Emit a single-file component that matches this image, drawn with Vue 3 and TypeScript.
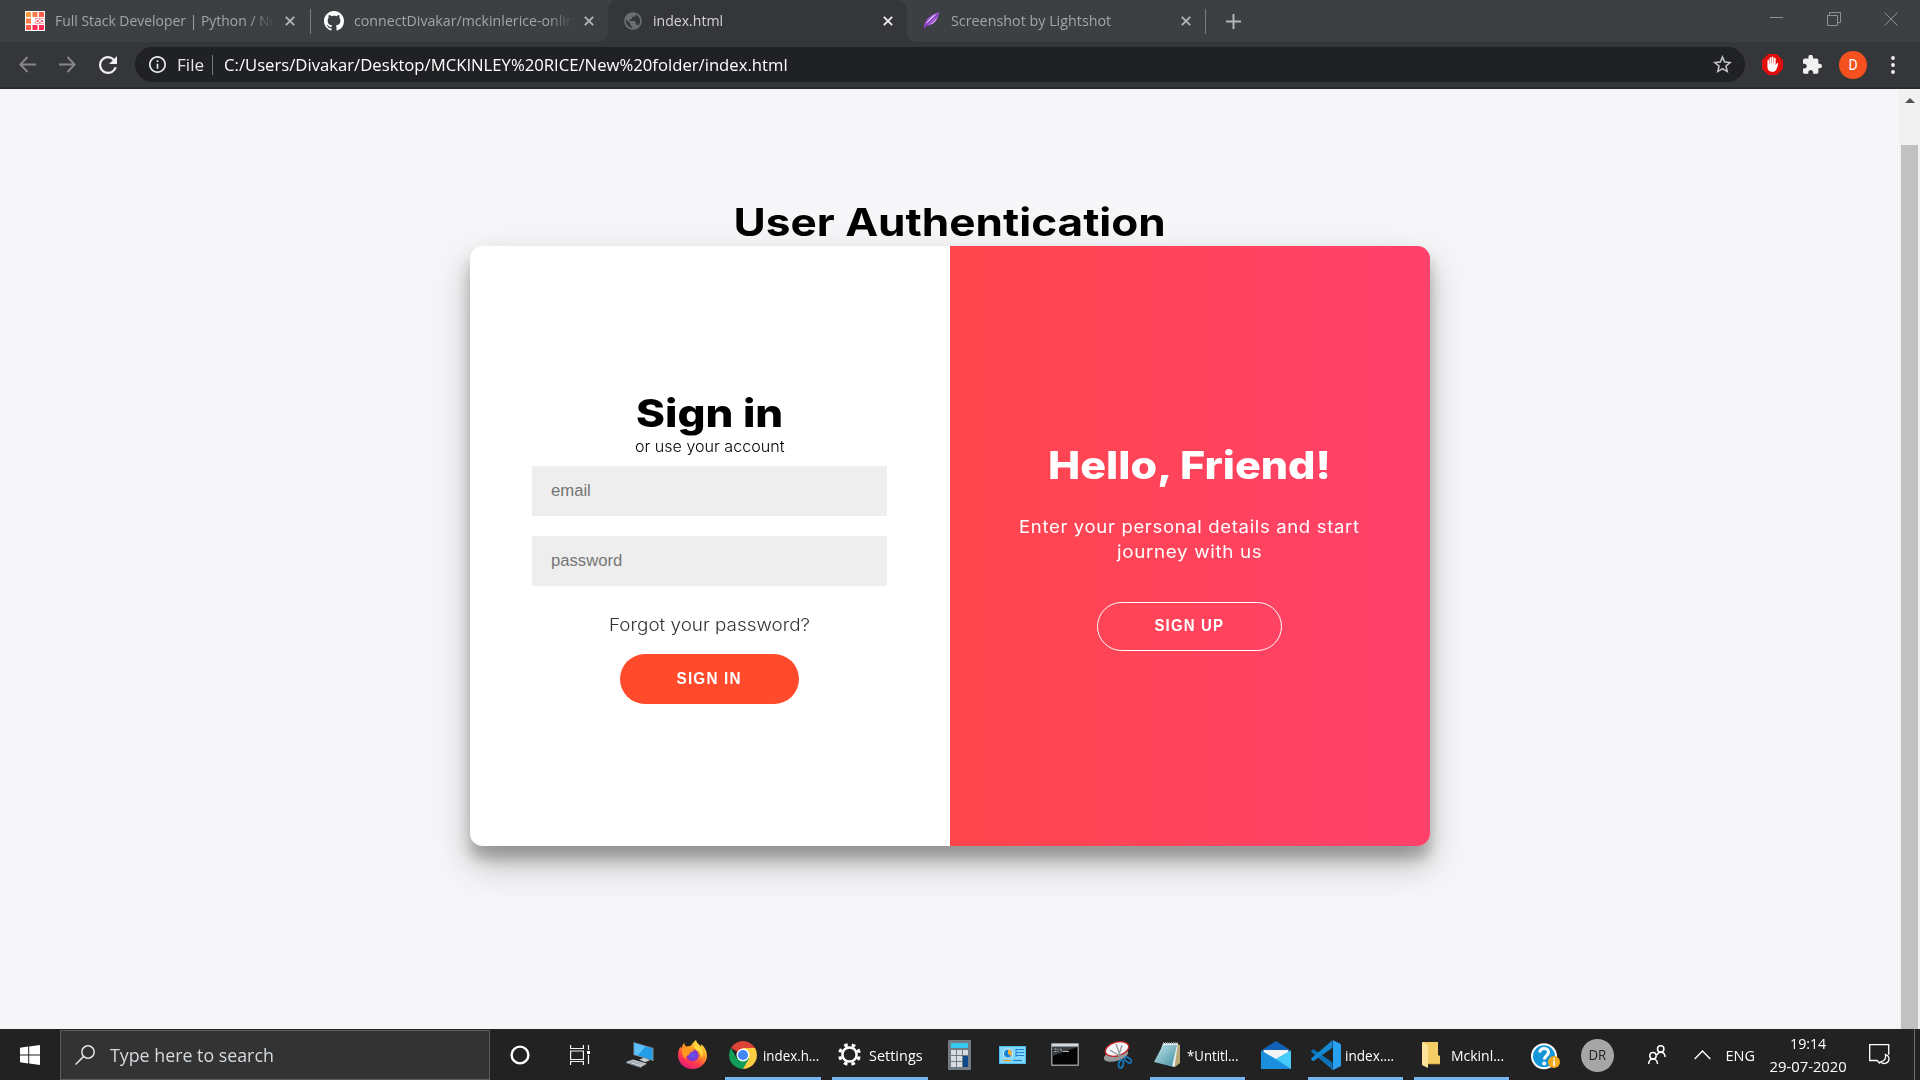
<script setup lang="ts">
import type { Directive } from 'vue'

// Stretches or condenses a label horizontally to the given width.
const vFit: Directive<HTMLElement, number> = {
  mounted(el, binding) {
    const natural = el.offsetWidth
    if (natural > 0) el.style.transform = `scaleX(${binding.value / natural})`
  },
}

interface Tab {
  kind: string
  title: string
  width: number
  active?: boolean
}

const tabs: Tab[] = [
  { kind: 'rice', title: 'Full Stack Developer | Python / No', width: 223 },
  { kind: 'github', title: 'connectDivakar/mckinlerice-onlin', width: 221 },
  { kind: 'globe', title: 'index.html', width: 70, active: true },
  { kind: 'feather', title: 'Screenshot by Lightshot', width: 160 },
]
</script>

<template>
  <div class="screen">
    <header class="tabstrip">
      <div v-for="tab in tabs" :key="tab.kind" class="tab" :class="[tab.kind, { active: tab.active }]">
        <svg v-if="tab.kind === 'rice'" class="fav" viewBox="0 0 20 20">
          <rect width="20" height="20" fill="#fff" />
          <path fill="#ff9a3c" d="M1 1h5v5H1z" /><path fill="#ff7a45" d="M7.500 1h5v5h-5zM1 7.500h5v5H1z" />
          <path fill="#ff5a4c" d="M14 1h5v5h-5zM1 14h5v5H1z" /><path fill="#ff2b55" d="M7.500 14h5v5h-5zM14 14h5v5h-5z" />
          <path fill="#ff3f50" d="M10 7.500H19v5H10z" />
          <path fill="none" stroke="#fff" stroke-width="1.400" d="M14.800 10c-1.200-2-4-2.200-4 0s2.800 2 4 0 4-2.200 4 0-2.800 2-4 0z" />
        </svg>
        <svg v-else-if="tab.kind === 'github'" class="fav" viewBox="0 0 16 16" fill="#fff">
          <path d="M8 0C3.580 0 0 3.580 0 8c0 3.540 2.290 6.530 5.470 7.590.4.070.55-.17.55-.38 0-.19-.01-.82-.01-1.490-2.010.37-2.530-.49-2.690-.94-.09-.23-.48-.94-.82-1.130-.28-.15-.68-.52-.01-.53.63-.01 1.080.58 1.230.82.72 1.210 1.870.87 2.330.66.07-.52.28-.87.51-1.070-1.780-.2-3.640-.89-3.640-3.950 0-.87.31-1.590.82-2.150-.08-.2-.36-1.020.08-2.120 0 0 .67-.21 2.200.82.64-.18 1.320-.27 2-.27s1.360.09 2 .27c1.530-1.040 2.200-.82 2.200-.82.44 1.100.16 1.920.08 2.120.51.56.82 1.270.82 2.150 0 3.070-1.870 3.750-3.650 3.950.29.25.54.73.54 1.480 0 1.070-.01 1.930-.01 2.200 0 .21.15.46.55.38A8.010 8.010 0 0 0 16 8c0-4.420-3.580-8-8-8z" />
        </svg>
        <svg v-else-if="tab.kind === 'globe'" class="fav" viewBox="0 0 24 24" fill="#6b6f74">
          <path d="M12 1.500C6.200 1.500 1.500 6.200 1.500 12S6.200 22.500 12 22.500 22.500 17.800 22.500 12 17.800 1.500 12 1.500zm-1 18.900A8.500 8.500 0 0 1 3.700 10.200L8.700 15v1.100c0 1.100.9 2 2.300 2v2.300zm7.400-2.600c-.3-.9-1.100-1.500-2.100-1.500h-1.100v-3.200c0-.6-.5-1-1-1H7.800V9.900H10c.6 0 1-.4 1-1V6.800h2.200c1.100 0 2-.9 2-2v-.5a8.500 8.500 0 0 1 3.200 13.500z" />
        </svg>
        <svg v-else class="fav" viewBox="0 0 20 20">
          <path fill="#9a50d0" d="M2 18C2 9 9 3 19 0c-.5 7-4 14-13.500 15.500z" />
          <path fill="#e3c2f7" d="M5 13c2-5 7-9 11-11-2 4-6 8-11 11zM8 14c4-2 7-5 8.500-8-.5 4-3.500 7-8.500 8z" />
          <path stroke="#6c2ca3" fill="none" d="M1.500 19.500C6 12 11 7 17 3" />
        </svg>
        <div class="tab-title"><span v-fit="tab.width" class="fit">{{ tab.title }}</span></div>
        <svg class="tab-close" viewBox="0 0 10 10"><path d="M.8.8l8.400 8.400M9.200.8L.8 9.200" /></svg>
      </div>
      <svg class="plus" viewBox="0 0 15 15"><path d="M7.500 0v15M0 7.500h15" /></svg>
      <div class="window-controls">
        <svg viewBox="0 0 14 14"><path d="M0 5.500h13" /></svg>
        <svg viewBox="0 0 14 14"><path d="M.5 3.500h10v10H.5zM2.500 3V.5h11v10H11" /></svg>
        <svg viewBox="0 0 14 14"><path d="M.5.5l13 13M13.500.5l-13 13" /></svg>
      </div>
    </header>

    <div class="toolbar">
      <svg class="nav back" viewBox="0 0 17 17"><path d="M17 8.500H1.500M8.500 1L1.300 8.500l7.200 7.500" /></svg>
      <svg class="nav forward" viewBox="0 0 17 17"><path d="M0 8.500h15.500M8.500 1l7.200 7.500L8.500 16" /></svg>
      <svg class="reload" viewBox="4 4 16 16"><path d="M17.650 6.350A7.958 7.958 0 0 0 12 4c-4.420 0-7.990 3.580-7.990 8s3.570 8 7.990 8c3.730 0 6.840-2.550 7.730-6h-2.080A5.990 5.990 0 0 1 12 18c-3.310 0-6-2.690-6-6s2.690-6 6-6c1.660 0 3.140.69 4.220 1.780L13 11h7V4l-2.350 2.350z" /></svg>
      <div class="omnibox">
        <svg class="info" viewBox="2 2 20 20"><path d="M11 7h2v2h-2zm0 4h2v6h-2zm1-9C6.480 2 2 6.480 2 12s4.480 10 10 10 10-4.480 10-10S17.520 2 12 2zm0 18c-4.410 0-8-3.590-8-8s3.590-8 8-8 8 3.590 8 8-3.590 8-8 8z" /></svg>
        <div class="scheme"><span v-fit="27" class="fit">File</span></div>
        <div class="url"><span v-fit="564" class="fit">C:/Users/Divakar/Desktop/MCKINLEY%20RICE/New%20folder/index.html</span></div>
        <svg class="star" viewBox="2 2 20 20"><path d="M22 9.240l-7.190-.62L12 2 9.190 8.630 2 9.240l5.460 4.730L5.820 21 12 17.270 18.180 21l-1.630-7.030L22 9.240zM12 15.400l-3.760 2.270 1-4.280-3.320-2.880 4.380-.38L12 6.100l1.710 4.040 4.380.38-3.320 2.880 1 4.280L12 15.400z" /></svg>
      </div>
      <svg class="blocker" viewBox="0 0 20 20">
        <path fill="#e40d0d" d="M6 0h8l6 6v8l-6 6H6l-6-6V6z" />
        <path fill="#fff" d="M5.200 6.200c0-1 1.500-1 1.500 0v3h.4V4c0-1.100 1.700-1.100 1.700 0v4.800h.4V3.200c0-1.100 1.700-1.100 1.700 0v5.600h.4V4.300c0-1.100 1.700-1.100 1.700 0v6.500l1.100-1.800c.5-.7 1.500-.3 1.300.5-.8 3-1.600 7.500-5.200 7.500-4 0-5-2.400-5-5z" />
      </svg>
      <svg class="puzzle" viewBox="2 1.500 21 20.500"><path d="M20.500 11H19V7c0-1.100-.9-2-2-2h-4V3.500a2.500 2.500 0 0 0-5 0V5H4c-1.100 0-1.990.9-1.990 2v3.800H3.500c1.490 0 2.700 1.210 2.700 2.700s-1.210 2.700-2.700 2.700H2V20c0 1.100.9 2 2 2h3.800v-1.500c0-1.490 1.210-2.700 2.700-2.700s2.700 1.210 2.700 2.700V22H17c1.100 0 2-.9 2-2v-4h1.500a2.500 2.500 0 0 0 0-5z" /></svg>
      <div class="avatar">D</div>
      <svg class="more" viewBox="0 0 4 18"><circle cx="2" cy="2" r="1.900" /><circle cx="2" cy="9" r="1.900" /><circle cx="2" cy="16" r="1.900" /></svg>
    </div>

    <div class="viewport">
      <main class="page">
        <h1><span v-fit="432" class="fit mid">User Authentication</span></h1>
        <div class="card">
          <form class="sign-in" @submit.prevent>
            <h2><span v-fit="147" class="fit mid">Sign in</span></h2>
            <p class="hint"><span v-fit="149" class="fit mid">or use your account</span></p>
            <input type="email" placeholder="email" />
            <input type="password" placeholder="password" />
            <a class="forgot"><span v-fit="201" class="fit mid">Forgot your password?</span></a>
            <button class="primary"><span v-fit="65" class="fit mid">SIGN IN</span></button>
          </form>
          <section class="welcome">
            <h2><span v-fit="283" class="fit mid">Hello, Friend!</span></h2>
            <p><span v-fit="341" class="fit mid">Enter your personal details and start</span></p>
            <p><span v-fit="145" class="fit mid">journey with us</span></p>
            <button class="ghost"><span v-fit="70" class="fit mid">SIGN UP</span></button>
          </section>
        </div>
      </main>
      <div class="scrollbar">
        <svg viewBox="0 0 10 5"><path d="M5 0l5 5H0z" /></svg>
        <div class="thumb"></div>
      </div>
    </div>

    <footer class="taskbar">
      <div class="cell start">
        <svg width="20" height="20" viewBox="0 0 20 20" fill="#fff"><path d="M0 2.700L8.200 1.600v7.800H0zM9.200 1.500L20 0v9.400H9.200zM0 10.400h8.200v8L0 17.300zM9.200 10.400H20V20L9.200 18.500z" /></svg>
      </div>
      <div class="search">
        <svg width="20" height="20" viewBox="0 0 20 20" fill="none" stroke="#e4e4e4" stroke-width="1.500"><circle cx="13" cy="7" r="6.200" /><path d="M8.700 11.400L.5 19.500" /></svg>
        <span v-fit="164" class="fit">Type here to search</span>
      </div>
      <div class="cell w60"><svg width="20" height="20" viewBox="0 0 20 20"><circle cx="10" cy="10" r="8.400" fill="none" stroke="#fff" stroke-width="2.400" /></svg></div>
      <div class="cell w60">
        <svg width="21" height="20" viewBox="0 0 21 20" fill="none" stroke="#f2f2f2" stroke-width="1.200"><path d="M.6 0v3.500h12.800V0M.6 6h12.800v8.500H.6zM.6 20v-3.500h12.800V20M18.500 0v5M18.500 10v9" /><path fill="#fff" stroke="none" d="M17 6h3v3h-3z" /></svg>
      </div>
      <div class="cell w60">
        <svg width="28" height="26" viewBox="0 0 28 26">
          <path fill="#7d919b" d="M7.500 0L27.500 6v13L7.500 13z" /><path fill="#239de8" d="M8.300 1L26.500 6.700v11.200L8.300 12.300z" /><path fill="#5cc0fb" d="M8.300 1l11 3.500L12 13.300l-3.700-1z" />
          <path fill="#c3ccd1" d="M13 17.500l5-1.700 6 2.400-5 2z" /><path fill="#d5dce0" d="M0 20l7-2.500 14 4.200-6 3.300z" /><path fill="#8b989f" d="M0 20l15 5v1L0 21z" />
          <path stroke="#8b989f" stroke-width=".7" fill="none" d="M3 19l14 4.700M5 18.200l14 4.500M4 21l7-2.500M8 22.500l7-2.800" />
        </svg>
      </div>
      <div class="cell firefox">
        <svg width="29" height="29" viewBox="0 0 29 29">
          <defs>
            <linearGradient id="ff-body" x1=".85" y1="0" x2=".25" y2="1"><stop offset="0" stop-color="#fff44f" /><stop offset=".4" stop-color="#ff9a1f" /><stop offset=".7" stop-color="#ff3b4b" /><stop offset="1" stop-color="#e3157f" /></linearGradient>
            <radialGradient id="ff-core"><stop offset="0" stop-color="#5b5bf0" /><stop offset="1" stop-color="#8a2fc9" /></radialGradient>
          </defs>
          <path fill="url(#ff-body)" d="M14.500 29C6 29 0 22.500 0 15.500c0-4 1-6.500 2.500-9 .3 1 .6 1.500 1 2C4 5.500 5 4 6.500 3c-.1 1.700.6 3 2 3.600 1-.5 2.500-.7 4-.5C13.500 4.500 15.500 2 18 0c.5 3 3 4 5 6.500.3-.7.3-1.500 0-2.500 4 3 6 7.500 6 11.500C29 23 22.500 29 14.500 29z" />
          <circle cx="14.700" cy="15.300" r="6" fill="url(#ff-core)" />
          <path fill="#ff9820" d="M4 9c2-2 5-2.500 8-1.500 1 1.500 2.500 2 4.500 2-.5 2-2.500 2-4 2.800-1 .7-.6 2.200-2 2.700-2.200.7-3.200 2-2.500 4.500C5 17 3 13 4 9z" />
          <path fill="#ffda3e" d="M17.500 1.500c1 3.500 5.500 4.800 7 9.500.7 2.500.5 5-1 7-.2-4-2-6.500-5-8-2-1.500-3-4.500-1-8.500z" />
        </svg>
      </div>
      <div class="app chrome">
        <svg width="28" height="28" viewBox="0 0 28 28">
          <path fill="#db4437" d="M14 14L1.900 7A14 14 0 0 1 26.100 7z" /><path fill="#ffcd40" d="M14 14V7h12.100A14 14 0 0 1 14 28z" /><path fill="#0f9d58" d="M14 14l6.100 3.500L14 28A14 14 0 0 1 1.900 7l6 10.500z" />
          <circle cx="14" cy="14" r="6.500" fill="#fff" /><circle cx="14" cy="14" r="5.100" fill="#4285f4" />
        </svg>
        <span v-fit="56" class="fit">index.h...</span>
      </div>
      <div class="app settings">
        <svg width="23" height="23" viewBox="0 0 23 23" fill="none" stroke="#fff">
          <circle cx="11.500" cy="11.500" r="7.100" stroke-width="2.500" />
          <circle cx="11.500" cy="11.500" r="9.800" stroke-width="3.200" stroke-dasharray="3.600 4.097" stroke-dashoffset="-2" />
        </svg>
        <span v-fit="54" class="fit">Settings</span>
      </div>
      <div class="cell calc">
        <svg width="23" height="30" viewBox="0 0 23 30">
          <rect width="23" height="30" rx="1" fill="#737b84" /><path fill="#37c9f2" d="M3 3h17v5H3z" />
          <path fill="#d7dde3" d="M3 10h5v5H3zM9 10h5v5H9zM15 10h5v5h-5zM3 16h5v5H3zM9 16h5v5H9zM3 22h5v5H3zM9 22h5v5H9z" /><path fill="#0c4a8c" d="M15 16h5v11h-5z" />
        </svg>
      </div>
      <div class="cell panel">
        <svg width="27" height="18" viewBox="0 0 27 18">
          <rect width="27" height="18" fill="#4dbdf2" /><path fill="#83d8fa" d="M1 1h25v16H1z" /><circle cx="9" cy="7.500" r="5" fill="#d8f2ff" /><circle cx="9" cy="7.500" r="4" fill="#1a83cf" /><path fill="#f9b233" d="M9 7.500v-4a4 4 0 0 1 2.800 6.800z" />
          <path stroke="#1a83cf" fill="none" d="M17 3.500h8M17 6.500h8M17 9.500h8M17 3v8" /><path stroke="#f39b1b" stroke-width="1.200" d="M4 14.500h8" /><path stroke="#1a83cf" stroke-width="1.200" d="M14 14.500h9" />
        </svg>
      </div>
      <div class="cell cmd">
        <svg width="28" height="23" viewBox="0 0 28 23">
          <rect width="28" height="23" rx="1" fill="#8f969b" /><path fill="#d5d8da" d="M1 1h26v2H1z" /><path fill="#050505" d="M1.500 4h25v17.500h-25z" /><path fill="#3a3d40" d="M1.500 4h25L1.500 13z" />
          <path stroke="#bbb" fill="none" d="M3.500 6h2M3.500 8.500h2M7 6v.8M7 7.800v.8M9 5.500l2 3M12 8.500h6" />
        </svg>
      </div>
      <div class="cell snip">
        <svg width="28" height="28" viewBox="0 0 28 28">
          <ellipse cx="12" cy="14.500" rx="12.500" ry="5.500" transform="rotate(-16 12 14.500)" fill="#969a9c" />
          <ellipse cx="13" cy="8" rx="12" ry="6.800" transform="rotate(-16 13 8)" fill="#f7f7f7" stroke="#c62328" stroke-width="1.300" />
          <path stroke="#90989d" stroke-width="1.300" fill="none" d="M12 3l5 14M6 9l13 8M18 4l-3 10" />
          <g fill="none" stroke="#1479bd" stroke-width="1.700"><ellipse cx="17" cy="23" rx="2.300" ry="4" transform="rotate(12 17 23)" /><ellipse cx="24" cy="19" rx="4" ry="2.100" transform="rotate(35 24 19)" /></g>
        </svg>
      </div>
      <div class="app note">
        <svg width="27" height="26" viewBox="0 0 27 26">
          <defs><linearGradient id="note-page" x1="0" y1="0" x2="1" y2="1"><stop offset="0" stop-color="#c3e7ec" /><stop offset="1" stop-color="#3f8e9f" /></linearGradient></defs>
          <path fill="#b9a878" d="M23 2l3 1v18l-5 4-2-2z" /><path fill="#e9eff1" d="M9 1h15l-3.500 24L3 20z" />
          <path fill="url(#note-page)" d="M9 3h14L18 24.500 0 20z" /><path stroke="#8a9498" stroke-dasharray="1 1" stroke-width="2" d="M9 1h16" />
        </svg>
        <span v-fit="51" class="fit">*Untitl...</span>
      </div>
      <div class="cell mail">
        <svg width="30" height="28" viewBox="0 0 30 28"><path fill="#0f62b5" d="M0 9.500L15 0l15 9.500z" /><path fill="#f4f4f4" d="M2.500 9h25v10h-25z" /><path fill="#27a6ed" d="M0 28V9.500L15 18l15-8.500V28z" /><path fill="#46cbfb" d="M30 9.500V28L15 18z" /><path fill="#1b8fde" d="M0 9.500L30 28H0z" /></svg>
      </div>
      <div class="app code">
        <svg width="30" height="30" viewBox="0 0 30 30"><path fill="#0c71b7" d="M1.500 9.500L.3 10.700c-.4.4-.4 1 0 1.400l21.200 17.700V22.500L3 9.500c-.5-.4-1-.4-1.500 0z" /><path fill="#1689d3" d="M1.500 20.800L.3 19.600c-.4-.4-.4-1 0-1.400L21.500.3v7.500L3 20.800c-.5.4-1 .4-1.500 0z" /><path fill="#27a1f0" d="M22 .2L29 3.400c.6.3 1 .9 1 1.500v20.200c0 .7-.4 1.300-1 1.500L22 30c-.7.200-1.400 0-1.700-.5.900.5 1.700.2 1.700-.9V1.500C22 .3 21.200.1 20.300.6 20.600.1 21.300-.1 22 .2z" /></svg>
        <span v-fit="49" class="fit">index....</span>
      </div>
      <div class="app folder">
        <svg width="18" height="26" viewBox="0 0 18 26"><path fill="#f4cd67" d="M0 0h16v13l2 1v8H5z" /><path fill="#ffe39a" d="M0 0l6 3.500V26L0 23z" /><path fill="#dca93b" d="M6 21.500h12v.8H6z" /></svg>
        <span v-fit="53" class="fit">Mckinl...</span>
      </div>
      <div class="cell help">
        <svg width="29" height="27" viewBox="0 0 29 27">
          <circle cx="13" cy="13.300" r="13" fill="#fff" /><circle cx="13" cy="13.300" r="11" fill="#1496d8" />
          <path fill="none" stroke="#fff" stroke-width="3" d="M8.800 9.500c0-5.500 8.700-5 8.700-.3 0 3.300-4.200 3.500-4.200 7.300" /><circle cx="13.200" cy="20.500" r="2" fill="#fff" />
          <circle cx="23" cy="19" r="6" fill="#f5a91c" /><path fill="#fff" d="M22.200 15h1.700v1.600h-1.700zM22.200 17.600h1.700V23h-1.700z" />
        </svg>
      </div>
      <div class="user"><span v-fit="18" class="fit mid">DR</span></div>
      <div class="cell people">
        <svg width="18" height="20" viewBox="0 0 18 20" fill="none" stroke="#fff" stroke-width="1.500"><circle cx="12.700" cy="4" r="3.200" /><circle cx="5" cy="10.800" r="3.200" /><path d="M.7 19c0-3 2-5 4.300-5s4.500 2 4.500 5M9 10c.8-1.800 2-2.700 3.700-2.700 2.500 0 4.200 2 4.500 4.700" /></svg>
      </div>
      <div class="cell caret"><svg width="17" height="10" viewBox="0 0 17 10" fill="none" stroke="#fff" stroke-width="1.400"><path d="M.7 9l7.800-8 7.800 8" /></svg></div>
      <div class="cell lang"><span v-fit="30" class="fit mid">ENG</span></div>
      <div class="clock">
        <div><span v-fit="36" class="fit mid">19:14</span></div>
        <div><span v-fit="77" class="fit mid">29-07-2020</span></div>
      </div>
      <div class="cell notif">
        <svg width="21" height="21" viewBox="0 0 21 21" fill="none" stroke="#fff" stroke-width="1.300"><path d="M11 19.500l-3-3H.7V.7h19v10M16.500 10.500c.7 3.500-1 6.500-5 7.500 3.500 3 8.500 1 8.500-3 0-2-1.200-3.700-3.500-4.500z" /></svg>
      </div>
      <div class="peek"></div>
    </footer>
  </div>
</template>

<style>
html,
body {
  margin: 0;
  overflow: hidden;
}
</style>

<style scoped>
.screen {
  width: 1920px;
  height: 1080px;
  display: flex;
  flex-direction: column;
  overflow: hidden;
  font-family: 'Open Sans', 'Noto Sans', sans-serif;
  background: #f6f5f7;
}
* {
  box-sizing: border-box;
}
svg {
  display: block;
  flex: none;
}
h1,
h2,
p {
  margin: 0;
}
.fit {
  display: inline-block;
  flex: none;
  white-space: nowrap;
  transform-origin: 0 50%;
}
.fit.mid {
  transform-origin: 50% 50%;
}

/* Tab strip */
.tabstrip {
  height: 42px;
  flex: none;
  display: flex;
  align-items: center;
  background: #3c4043;
}
.tab {
  position: relative;
  height: 42px;
  width: 299px;
  flex: none;
  display: flex;
  align-items: center;
  padding: 0 14px 0 16px;
  color: #a1a5a9;
  font-size: 14.500px;
}
.tab.rice {
  width: 310px;
  padding-left: 25px;
  padding-right: 15px;
}
.tab.github {
  width: 298px;
  padding-left: 14px;
}
.tab.rice::after,
.tab.feather::after {
  content: '';
  position: absolute;
  right: -1px;
  top: 9px;
  width: 1px;
  height: 25px;
  background: #7b7e81;
}
.tab.feather::after {
  right: 0;
}
.fav {
  width: 20px;
  height: 20px;
}
.tab.globe .fav {
  margin-left: -1px;
}
.tab.active {
  background: #35363a;
  border-radius: 10px 10px 0 0;
  color: #d3d4d6;
}
.tab.active::before,
.tab.active::after {
  content: '';
  position: absolute;
  bottom: 0;
  width: 10px;
  height: 10px;
}
.tab.active::before {
  left: -10px;
  background: radial-gradient(circle at 0 0, transparent 9.500px, #35363a 10px);
}
.tab.active::after {
  right: -10px;
  background: radial-gradient(circle at 100% 0, transparent 9.500px, #35363a 10px);
}
.tab.feather .fav {
  width: 18px;
  margin-right: 1px;
  margin-left: -1px;
}
.tab-title {
  width: 220px;
  margin: 0 10px 0 10px;
  line-height: 20px;
  overflow: hidden;
  mask-image: linear-gradient(to right, #000 88%, transparent 100%);
}
.tab.active .tab-title {
  width: 221px;
}
.tab.feather .tab-title {
  margin-left: 10px;
}
.tab-close {
  width: 10px;
  height: 10px;
  stroke: #b2b5b8;
  stroke-width: 1.800;
}
.tab.active .tab-close {
  stroke: #eeeeef;
}
.plus {
  width: 15px;
  height: 15px;
  margin-left: 20px;
  stroke: #b2b5b8;
  stroke-width: 2;
}
.window-controls {
  margin: 0 22px 5px auto;
  display: flex;
  gap: 43px;
}
.window-controls svg {
  width: 14px;
  height: 14px;
  fill: none;
  stroke: #8e9193;
}

/* Toolbar */
.toolbar {
  height: 47px;
  flex: none;
  display: flex;
  align-items: center;
  padding: 0 0 0 19px;
  background: #35363a;
  border-bottom: 2px solid #292a2d;
}
.nav {
  width: 17px;
  height: 17px;
  margin-right: 23px;
  fill: none;
  stroke: #86878a;
  stroke-width: 1.900;
}
.reload {
  width: 18px;
  height: 18px;
  fill: #f1f1f1;
}
.omnibox {
  width: 1610px;
  height: 35px;
  margin-left: 18px;
  display: flex;
  align-items: center;
  padding: 0 13px 0 14px;
  border-radius: 18px;
  background: #202124;
  color: #fff;
  font-size: 16.500px;
}
.info {
  width: 17px;
  height: 17px;
  fill: #e8eaed;
}
.scheme {
  width: 36px;
  height: 20px;
  margin: 0 11px 0 11px;
  line-height: 19px;
  color: #e4e5e7;
  border-right: 1px solid #76787b;
}
.url {
  width: 1000px;
  height: 20px;
  line-height: 19px;
}
.star {
  width: 19px;
  height: 19px;
  margin-left: auto;
  fill: #c4c6c9;
}
.blocker {
  width: 21px;
  height: 21px;
  margin-left: 17px;
}
.puzzle {
  width: 19px;
  height: 19px;
  margin-left: 20px;
  fill: #f1f1f1;
}
.avatar {
  width: 28px;
  height: 28px;
  margin-left: 17px;
  border-radius: 50%;
  background: #f4511e;
  color: #fff;
  text-align: center;
  font: 14px/28px Roboto, sans-serif;
}
.more {
  width: 4px;
  height: 18px;
  margin-left: 24px;
  fill: #f1f1f1;
}

/* Page */
.viewport {
  height: 940px;
  flex: none;
  display: flex;
}
.page {
  flex: 1;
  display: flex;
  flex-direction: column;
  align-items: center;
  padding-top: 109px;
  overflow: hidden;
  background: #f6f5f7;
  font-family: Inter, 'Open Sans', sans-serif;
}
h1,
h2 {
  height: 48px;
  line-height: 48px;
  font-size: 38.500px;
  font-weight: 800;
  color: #000;
}
h1 {
  font-weight: 750;
}
.card {
  width: 960px;
  height: 600px;
  flex: none;
  display: flex;
  margin-left: 1px;
  border-radius: 12.500px;
  overflow: hidden;
  background: #fff;
  box-shadow: 0 17.500px 35px rgba(0, 0, 0, 0.25), 0 12.500px 12.500px rgba(0, 0, 0, 0.22);
}
.sign-in,
.welcome {
  width: 480px;
  display: flex;
  flex-direction: column;
  align-items: center;
}
.sign-in {
  padding: 143px 1px 0 0;
}
.hint {
  height: 19px;
  margin-bottom: 10px;
  line-height: 19px;
  font-size: 15px;
  font-weight: 300;
  color: #000;
}
input {
  width: 355px;
  height: 50px;
  margin: 0 0 20px;
  padding: 0 19px;
  border: 0;
  border-radius: 0;
  outline: 0;
  background: #eee;
  font: 16.670px 'Liberation Sans', Arial, sans-serif;
}
input::placeholder {
  color: #757575;
}
.forgot {
  height: 24px;
  margin: 7px 0 17px;
  line-height: 24px;
  font-size: 17px;
  font-weight: 300;
  color: #333;
}
button {
  margin: 0;
  padding: 0 0 1px;
  color: #fff;
  font: bold 16px 'Liberation Sans', Arial, sans-serif;
  letter-spacing: 1.250px;
}
.primary {
  width: 179px;
  height: 50px;
  border: 0;
  border-radius: 25px;
  background: #ff4b2b;
}
.welcome {
  padding: 195px 1px 0 0;
  color: #fff;
  background: linear-gradient(to right, #ff464c, #ff416c);
}
.welcome h2 {
  color: #fff;
  margin-bottom: 26px;
}
.welcome p {
  height: 25px;
  line-height: 25px;
  font-size: 17px;
  letter-spacing: 0.600px;
}
.ghost {
  width: 185px;
  height: 49px;
  margin-top: 37px;
  border: 1px solid #fff;
  border-radius: 25px;
  background: transparent;
}
.scrollbar {
  width: 21px;
  display: flex;
  flex-direction: column;
  align-items: center;
  padding-top: 9px;
  background: #f1f1f1;
}
.scrollbar svg {
  width: 10px;
  height: 5px;
  fill: #505050;
}
.thumb {
  width: 17px;
  flex: 1;
  margin-top: 42px;
  background: #c1c1c1;
}

/* Taskbar */
.taskbar {
  height: 51px;
  flex: none;
  display: flex;
  background: #222;
  color: #fff;
  font-size: 15px;
}
.cell {
  flex: none;
  display: flex;
  align-items: center;
  justify-content: center;
}
.start,
.w60 {
  width: 60px;
}
.search {
  width: 430px;
  flex: none;
  height: 50px;
  margin-top: 1px;
  display: flex;
  align-items: center;
  gap: 15px;
  padding: 0 0 1px 14px;
  border: 1px solid #5c5c5c;
  background: #333;
  color: #d5dadf;
  font-size: 19px;
}
.firefox {
  width: 45px;
}
.app {
  width: 96px;
  flex: none;
  display: flex;
  align-items: center;
  gap: 6px;
  padding: 3px 0 0 4px;
  border-bottom: 3px solid #76b4ee;
  overflow: hidden;
}
.chrome {
  margin-left: 10px;
}
.settings {
  margin-left: 11px;
  gap: 8px;
  padding-left: 6px;
}
.calc {
  width: 47px;
  margin-left: 8px;
}
.panel {
  width: 45px;
  margin-left: 7px;
}
.cmd {
  width: 46px;
  margin-left: 7px;
}
.snip {
  width: 46px;
  margin-left: 7px;
}
.note {
  width: 95px;
  margin-left: 9px;
}
.mail {
  width: 46px;
  margin-left: 8px;
}
.code {
  width: 95px;
  margin-left: 9px;
  padding-left: 3px;
  gap: 4px;
}
.folder {
  width: 95px;
  margin-left: 11px;
  padding-left: 8px;
  gap: 11px;
}
.help {
  width: 51px;
  margin-left: 11px;
  padding-top: 3px;
}
.user {
  width: 33px;
  height: 33px;
  flex: none;
  margin: 10px 0 0 10px;
  border-radius: 50%;
  background: #a6a6a6;
  color: #222;
  text-align: center;
  font-size: 14px;
  line-height: 32px;
}
.people {
  width: 46px;
  margin-left: 20px;
}
.caret {
  width: 44px;
}
.lang {
  width: 32px;
}
.clock {
  width: 90px;
  flex: none;
  margin-left: 7px;
  padding-top: 3px;
  text-align: center;
  line-height: 23px;
}
.notif {
  width: 46px;
  margin-left: 3px;
}
.peek {
  width: 1px;
  margin-left: 12px;
  background: #6f6f6f;
}
</style>
